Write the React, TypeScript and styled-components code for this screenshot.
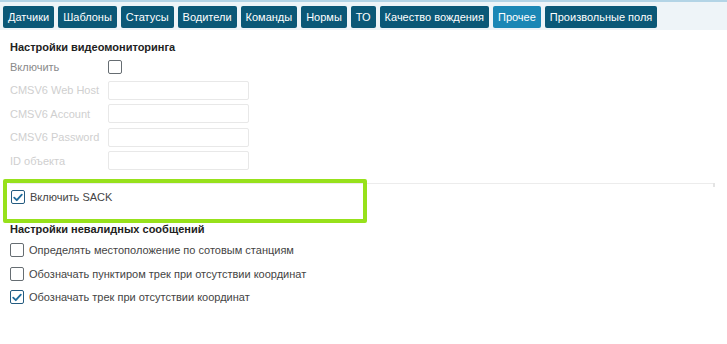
import React from "react";
import styled, { createGlobalStyle } from "styled-components";

const Global = createGlobalStyle`
  html, body { margin: 0; padding: 0; background: #fff; }
  body { font-family: "Liberation Sans", Arial, sans-serif; font-size: 11px; color: #333; }
`;

const Page = styled.div`
  position: relative;
  width: 727px;
  height: 344px;
  overflow: hidden;
`;

const TabBar = styled.div`
  display: flex;
  gap: 4px;
  height: 30px;
  box-sizing: border-box;
  padding: 6px 3px 2px;
  background: #eef4f8;
  border-top: 2px solid #b3d4e6;
`;

const Tab = styled.div<{ $active?: boolean }>`
  display: flex;
  align-items: center;
  height: 22px;
  margin-top: -2px;
  padding: 0 5px;
  border-radius: 2px;
  background: ${(p) => (p.$active ? "#1b87b5" : "#0b5877")};
  color: #fff;
  font-size: 11px;
  white-space: nowrap;
`;

const Content = styled.div`
  padding: 0 12px 0 10px;
`;

const Heading = styled.div<{ $top: number }>`
  font-weight: bold;
  font-size: 11px;
  color: #222;
  line-height: 13px;
  margin-top: ${(p) => p.$top}px;
`;

const FormGrid = styled.div`
  display: grid;
  grid-template-columns: 98px 141px;
  grid-auto-rows: 19px;
  row-gap: 4.5px;
  margin-top: 3px;
  align-items: center;
`;

const Label = styled.div<{ $muted?: boolean }>`
  color: ${(p) => (p.$muted ? "#cfcfcf" : "#8a8a8a")};
  font-size: 11px;
  white-space: nowrap;
`;

const Input = styled.div`
  height: 19px;
  box-sizing: border-box;
  border: 1px solid #e8e8e8;
  border-radius: 2px;
  background: #fff;
`;

const Box = styled.span<{ $checked?: boolean }>`
  display: inline-flex;
  align-items: center;
  justify-content: center;
  width: 14px;
  height: 14px;
  box-sizing: border-box;
  border: 1.5px solid ${(p) => (p.$checked ? "#245b80" : "#666d72")};
  border-radius: 2px;
  background: #fff;
  flex: none;
`;

const Section = styled.div`
  position: relative;
  margin-top: 13px;
  border-top: 1px solid #ececec;
  padding: 6px 0 0 1px;
  &::after {
    content: "";
    position: absolute;
    right: 0;
    top: -1px;
    width: 2px;
    height: 4px;
    background: #e4e4e4;
  }
`;

const CheckRow = styled.label`
  display: flex;
  align-items: center;
  gap: 5px;
  height: 14px;
  color: #444;
  font-size: 11px;
`;

const CheckList = styled.div`
  display: flex;
  flex-direction: column;
  gap: 9.5px;
  margin-top: 7px;
`;

const Highlight = styled.div`
  position: absolute;
  left: 3px;
  top: 179px;
  width: 364px;
  height: 44px;
  box-sizing: border-box;
  border: 4px solid #97e11b;
  border-radius: 2px;
  pointer-events: none;
`;

const Check = ({ checked }: { checked?: boolean }) => (
  <Box $checked={checked}>
    {checked && (
      <svg width="10" height="9" viewBox="0 0 10 9">
        <path d="M1.2 4.6 L3.8 7.2 L8.8 1.6" fill="none" stroke="#1f6c9c" strokeWidth="1.8" strokeLinecap="round" strokeLinejoin="round" />
      </svg>
    )}
  </Box>
);

const tabs = ["Датчики", "Шаблоны", "Статусы", "Водители", "Команды", "Нормы", "ТО", "Качество вождения", "Прочее", "Произвольные поля"];

export default function App() {
  return (
    <Page>
      <Global />
      <TabBar>
        {tabs.map((t) => (
          <Tab key={t} $active={t === "Прочее"}>{t}</Tab>
        ))}
      </TabBar>
      <Content>
        <Heading $top={11}>Настройки видеомониторинга</Heading>
        <FormGrid>
          <Label>Включить</Label>
          <Check />
          <Label $muted>CMSV6 Web Host</Label>
          <Input />
          <Label $muted>CMSV6 Account</Label>
          <Input />
          <Label $muted>CMSV6 Password</Label>
          <Input />
          <Label $muted>ID объекта</Label>
          <Input />
        </FormGrid>
        <Section>
          <CheckRow>
            <Check checked />
            Включить SACK
          </CheckRow>
        </Section>
        <Heading $top={19}>Настройки невалидных сообщений</Heading>
        <CheckList>
          <CheckRow><Check />Определять местоположение по сотовым станциям</CheckRow>
          <CheckRow><Check />Обозначать пунктиром трек при отсутствии координат</CheckRow>
          <CheckRow><Check checked />Обозначать трек при отсутствии координат</CheckRow>
        </CheckList>
      </Content>
      <Highlight />
    </Page>
  );
}
